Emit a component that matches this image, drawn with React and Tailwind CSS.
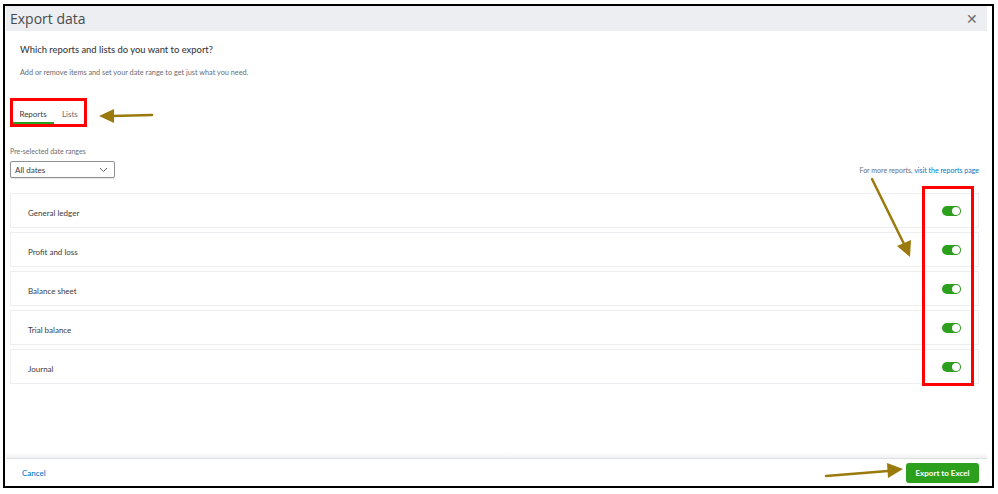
import React from 'react';

const reports = ['General ledger', 'Profit and loss', 'Balance sheet', 'Trial balance', 'Journal'];

function Toggle() {
  return (
    <div className="w-[19px] h-[10px] rounded-full bg-[#2ca01c] flex items-center justify-end pr-[1px]">
      <div className="w-[8px] h-[8px] rounded-full bg-white shadow-[0_0_1px_rgba(0,0,0,0.4)]" />
    </div>
  );
}

function Annotations() {
  // hand-drawn callouts layered over the dialog
  return (
    <div className="absolute inset-0 pointer-events-none">
      <div className="absolute left-[10px] top-[98px] w-[77px] h-[29px] border-[3px] border-[#ff0000]" />
      <div className="absolute left-[922px] top-[186px] w-[52px] h-[200px] border-[3px] border-[#ff0000]" />
      <svg className="absolute inset-0" width="998" height="494" viewBox="0 0 998 494">
        <g fill="#9a7a0c" stroke="#9a7a0c" strokeWidth="2.5" strokeLinecap="round">
          <line x1="152" y1="115" x2="112" y2="116" />
          <polygon points="99,116 114,109 114,123" stroke="none" />
          <line x1="872" y1="179" x2="904" y2="244" />
          <polygon points="910,257 897,246 911,240" stroke="none" />
          <line x1="826" y1="476" x2="888" y2="471" />
          <polygon points="903,469 887,463 888,478" stroke="none" />
        </g>
      </svg>
    </div>
  );
}

export default function App() {
  return (
    <div className="relative w-[998px] h-[494px] bg-white overflow-hidden" style={{ fontFamily: 'Lato, "Open Sans", sans-serif' }}>
      <div className="pt-[4px] pl-[3px]">
        <div className="w-[991px] h-[484px] border-2 border-black flex flex-col">
          <div className="ml-[1px] mr-[5px] h-[25px] bg-[#eceef1] flex items-center justify-between pl-[4px] pr-[9px]">
            <span className="text-[14px] text-[#4a4b4f]" style={{ fontFamily: '"Open Sans", sans-serif' }}>Export data</span>
            <span className="text-[14px] leading-none text-[#6b6c72]">✕</span>
          </div>

          <div className="pl-[5px] pr-[13px]">
            <p className="mt-[12px] pl-[10px] text-[9.4px] leading-[14px] text-[#393a3d] font-medium">
              Which reports and lists do you want to export?
            </p>
            <p className="mt-[11px] pl-[10px] text-[7.3px] leading-[10px] text-[#6b6c72]">
              Add or remove items and set your date range to get just what you need.
            </p>

            <div className="mt-[28px] flex items-end h-[18px]">
              <div className="ml-[2px] w-[42px] h-[18px] border-b-2 border-[#2ca01c] text-center text-[8px] leading-[16px] text-[#393a3d]">Reports</div>
              <div className="ml-[5px] px-[3px] h-[18px] text-[8px] leading-[16px] text-[#6b6c72]">Lists</div>
            </div>

            <p className="mt-[22px] text-[7px] leading-[10px] text-[#6b6c72]">Pre-selected date ranges</p>
            <div className="flex items-center justify-between">
              <div className="mt-[5px] w-[105px] h-[17px] border border-[#8d9096] rounded-[2px] flex items-center justify-between pl-[4px] pr-[6px] shadow-[0_1px_1px_rgba(0,0,0,0.1)]">
                <span className="text-[8px] text-[#393a3d]">All dates</span>
                <svg width="9" height="6" viewBox="0 0 9 6"><path d="M1 1l3.5 3.5L8 1" fill="none" stroke="#6b6c72" strokeWidth="1" /></svg>
              </div>
              <p className="mt-[6px] text-[7px] text-[#6b6c72]">
                For more reports, <span className="text-[#0077c5]">visit the reports page</span>
              </p>
            </div>

            <div className="mt-[15px] flex flex-col gap-[4px]">
              {reports.map((name) => (
                <div key={name} className="h-[35px] border border-[#eceef1] flex items-center justify-between pl-[17px] pr-[17px]">
                  <span className="text-[8px] text-[#393a3d] pt-[4px]">{name}</span>
                  <Toggle />
                </div>
              ))}
            </div>
          </div>

          <div className="mt-auto ml-[1px] mr-[5px]">
            <div className="h-[6px] bg-gradient-to-b from-white to-[#f1f2f3]" />
            <div className="h-[28px] border-t border-[#dcdee0] flex items-center justify-between pl-[16px] pr-[8px]">
              <span className="text-[8px] text-[#0077c5] font-medium">Cancel</span>
              <button className="w-[73px] h-[20px] rounded-[3px] bg-[#2ca01c] text-white text-[8px] font-bold">Export to Excel</button>
            </div>
          </div>
        </div>
      </div>
      <Annotations />
    </div>
  );
}
